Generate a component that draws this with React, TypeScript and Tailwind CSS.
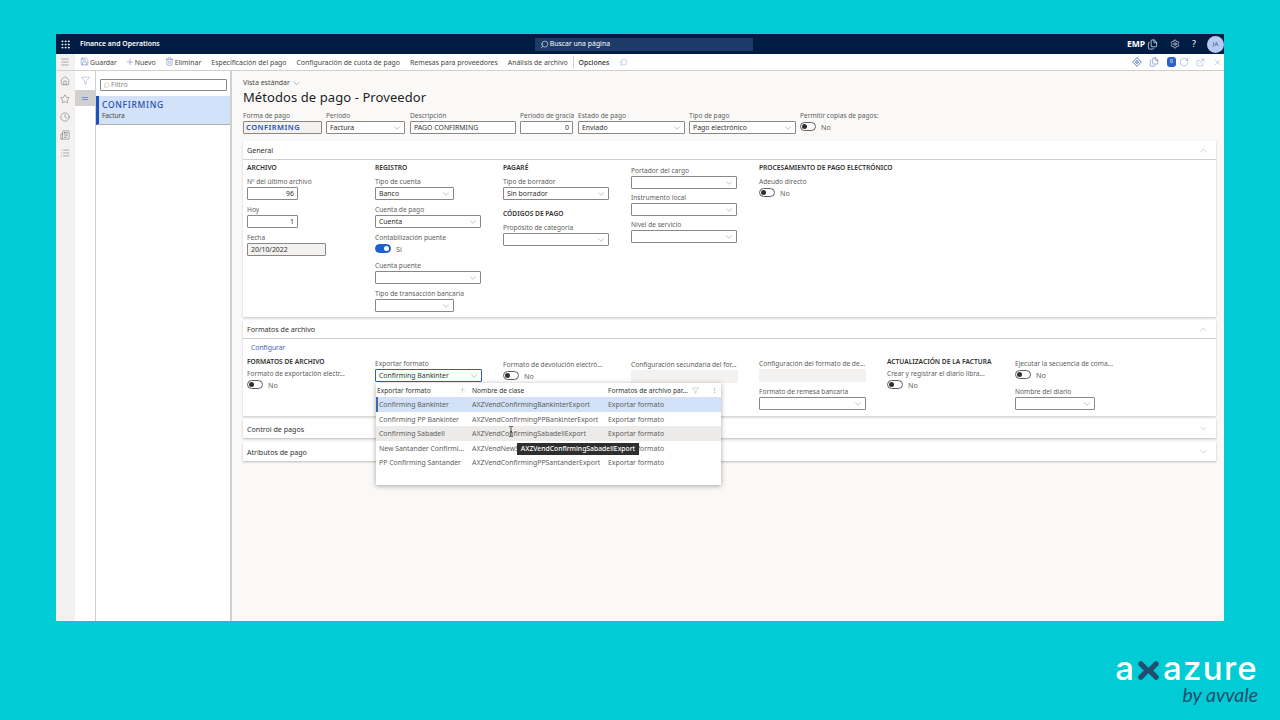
import { ChevronDown, ChevronUp, Clock, Filter, Home, List, Menu, Plus, Save, Search, Settings, Star, Trash2, X, ArrowUp, MoreVertical, Grip, RotateCw, ExternalLink, Newspaper, Files } from 'lucide-react';
import type { ReactNode } from 'react';

const Label = ({ children, className = '' }: { children: ReactNode; className?: string }) => (
  <div className={`h-[12px] leading-[13px] text-[6.6px] text-[#605e5c] whitespace-nowrap ${className}`}>{children}</div>
);

const Heading = ({ children }: { children: ReactNode }) => (
  <div className="h-[10px] leading-[12px] text-[6.65px] font-semibold text-[#323130] whitespace-nowrap">{children}</div>
);

const Input = ({ value = '', w, right = false, gray = false }: { value?: string; w: string; right?: boolean; gray?: boolean }) => (
  <div className={`${w} h-[13px] leading-[12px] border border-[#8a8886] rounded-[1px] px-[3px] text-[6.9px] text-[#323130] ${right ? 'text-right' : ''} ${gray ? 'bg-[#f3f2f1]' : 'bg-white'}`}>
    {value}
  </div>
);

const Select = ({ value = '', w, focus = false }: { value?: string; w: string; focus?: boolean }) => (
  <div className={`${w} h-[13px] border rounded-[1px] pl-[3px] pr-[2px] flex items-center justify-between bg-white text-[6.9px] text-[#323130] ${focus ? 'border-[#2f5fb8]' : 'border-[#8a8886]'}`}>
    <span className="pt-[1px]">{value}</span>
    <ChevronDown className="w-[10px] h-[10px] text-[#797775]" strokeWidth={1.1} />
  </div>
);

const Toggle = ({ on = false, text }: { on?: boolean; text: string }) => (
  <div className="h-[13px] flex items-start gap-[5px]">
    <div className={`w-[16px] h-[9px] mt-[1px] rounded-full border flex items-center px-[1px] ${on ? 'bg-[#1d5fd0] border-[#1d5fd0] justify-end' : 'bg-white border-[#605e5c] justify-start'}`}>
      <div className={`w-[5px] h-[5px] rounded-full ${on ? 'bg-white' : 'bg-[#323130]'}`} />
    </div>
    <span className="text-[7.2px] leading-[12px] text-[#605e5c]">{text}</span>
  </div>
);

const SectionHeader = ({ title, open = false }: { title: string; open?: boolean }) => (
  <div className={`h-[19px] pl-[4px] pr-[7px] flex items-center justify-between ${open ? 'border-b border-[#d2d0ce]' : ''}`}>
    <span className="pt-[1px] text-[7.1px] text-[#323130]">{title}</span>
    {open ? <ChevronUp className="w-[11px] h-[11px] text-[#a19f9d]" strokeWidth={1} /> : <ChevronDown className="w-[11px] h-[11px] text-[#a19f9d]" strokeWidth={1} />}
  </div>
);

const rows = [
  ['Confirming Bankinter', 'AXZVendConfirmingBankinterExport'],
  ['Confirming PP Bankinter', 'AXZVendConfirmingPPBankinterExport'],
  ['Confirming Sabadell', 'AXZVendConfirmingSabadellExport'],
  ['New Santander Confirmi...', 'AXZVendNewSantanderConfirmingExport'],
  ['PP Confirming Santander', 'AXZVendConfirmingPPSantanderExport'],
];

const FormatDropdown = () => (
  <div className="absolute left-[1px] top-[27px] z-10 w-[345px] h-[102px] bg-white shadow-[0_1px_5px_rgba(0,0,0,0.35)] text-[6.9px] text-[#605e5c]">
    <div className="h-[14px] pt-[1px] flex items-center text-[#323130] text-[6.6px]">
      <div className="w-[96px] pl-[1px] pr-[6px] flex items-center justify-between">
        <span>Exportar formato</span>
        <ArrowUp className="w-[7px] h-[7px] text-[#797775]" strokeWidth={1} />
      </div>
      <div className="w-[136px]">Nombre de clase</div>
      <div className="flex-1 flex items-center pr-[3px]">
        <span>Formatos de archivo par...</span>
        <Filter className="w-[7px] h-[7px] ml-[4px] text-[#797775]" strokeWidth={1} />
        <MoreVertical className="w-[7px] h-[7px] ml-auto text-[#797775]" strokeWidth={1} />
      </div>
    </div>
    {rows.map((row, i) => (
      <div key={row[0]} className={`h-[14.6px] pt-[2px] flex items-center ${i === 0 ? 'bg-[#d3e2f8] border-l-2 border-[#3f66b0]' : ''} ${i === 2 ? 'bg-[#edebe9]' : ''}`}>
        <div className={`${i === 0 ? 'w-[94px] pl-[1px]' : 'w-[96px] pl-[3px]'} whitespace-nowrap`}>{row[0]}</div>
        <div className="w-[136px] whitespace-nowrap">{row[1]}</div>
        <div className="flex-1">Exportar formato</div>
      </div>
    ))}
    <div className="absolute left-[141px] top-[60px] w-[122px] h-[12px] bg-[#2e2e2e] text-white text-[6.8px] font-medium leading-[12px] text-center whitespace-nowrap">
      AXZVendConfirmingSabadellExport
    </div>
    <svg className="absolute left-[132px] top-[43px] w-[6px] h-[11px] text-[#323130]" viewBox="0 0 6 11" fill="none" stroke="currentColor" strokeWidth="0.8">
      <path d="M1 .5h1.4L3 1l.6-.5H5M3 1v9M1 10.5h1.4L3 10l.6.5H5M2 5.5h2" />
    </svg>
  </div>
);

const DiamondIcon = () => (
  <svg className="w-[10px] h-[10px] text-[#3f66b0]" viewBox="0 0 12 12" fill="none" stroke="currentColor" strokeWidth="1">
    <path d="M6 .8 11.2 6 6 11.2.8 6z" />
    <circle cx="6" cy="6" r="1.6" />
  </svg>
);

export default function App() {
  return (
    <div className="w-[1280px] h-[720px] overflow-hidden bg-[#01cbd4] pt-[34px] px-[56px] font-['Noto_Sans',sans-serif]">
      <div className="w-[1168px] h-[587px] flex flex-col bg-white">
        {/* top bar */}
        <div className="h-[20px] bg-[#011c42] flex items-center text-white">
          <div className="w-[19px] flex justify-center">
            <Grip className="w-[11px] h-[11px]" strokeWidth={2} />
          </div>
          <span className="ml-[5px] pt-[1px] text-[6.9px] font-semibold">Finance and Operations</span>
          <div className="ml-[375px] w-[218px] h-[13px] bg-[#1c3b66] flex items-center pl-[5px] gap-[1px] text-[6.9px]">
            <Search className="w-[9px] h-[9px] -scale-x-100" strokeWidth={1.5} />
            <span className="pt-[1px]">Buscar una página</span>
          </div>
          <div className="ml-auto flex items-center">
            <span className="text-[8.5px] font-bold">EMP</span>
            <Files className="ml-[2px] w-[11px] h-[11px]" strokeWidth={1.5} />
            <Settings className="ml-[12px] w-[10px] h-[10px]" strokeWidth={1.5} />
            <span className="ml-[12px] text-[9px] w-[8px]">?</span>
            <div className="ml-[7px] w-[17px] h-[17px] rounded-full bg-[#b7caf0] text-[#36508a] text-[6px] flex items-center justify-center">JA</div>
          </div>
        </div>

        {/* toolbar */}
        <div className="h-[17px] flex items-center border-b border-[#d2d0ce] text-[6.9px] text-[#484644]">
          <div className="w-[19px] h-full bg-[#f3f2f1] pr-[2px] flex items-center justify-center">
            <Menu className="w-[10px] h-[10px] text-[#484644]" strokeWidth={1} />
          </div>
          <div className="ml-[5px] flex items-center gap-[10px] whitespace-nowrap">
            <span className="flex items-center gap-[1px]"><Save className="w-[9px] h-[9px] text-[#3f66b0]" strokeWidth={1.2} /><span className="pt-[2px]">Guardar</span></span>
            <span className="-ml-[2px] flex items-center"><Plus className="w-[10px] h-[10px] text-[#3f66b0]" strokeWidth={1} /><span className="pt-[2px]">Nuevo</span></span>
            <span className="-ml-[1px] flex items-center gap-[1px]"><Trash2 className="w-[9px] h-[9px] text-[#3f66b0]" strokeWidth={1.2} /><span className="pt-[2px]">Eliminar</span></span>
            <span className="pt-[2px]">Especificación del pago</span>
            <span className="pt-[2px]">Configuración de cuota de pago</span>
            <span className="pt-[2px]">Remesas para proveedores</span>
            <span className="pt-[2px] pr-[5px] border-r border-[#d2d0ce]">Análisis de archivo</span>
          </div>
          <span className="ml-[5px] pt-[2px] font-medium text-[#323130]">Opciones</span>
          <Search className="ml-[10px] w-[9px] h-[9px] text-[#6e8fd0] -scale-x-100" strokeWidth={1} />
          <div className="ml-auto pr-[2px] flex items-center gap-[7px] text-[#5b7cc0]">
            <DiamondIcon />
            <Files className="w-[10px] h-[10px]" strokeWidth={1.5} />
            <div className="ml-[1px] w-[9px] h-[10px] rounded-[3px] bg-[#2a62c8] text-white text-[5px] leading-[9px] text-center">0</div>
            <RotateCw className="-ml-[4px] w-[10px] h-[10px]" strokeWidth={1} />
            <ExternalLink className="w-[9px] h-[9px]" strokeWidth={1} />
            <X className="ml-[1px] w-[9px] h-[9px]" strokeWidth={1} />
          </div>
        </div>

        {/* body */}
        <div className="flex-1 flex min-h-0">
          <div className="w-[19px] bg-[#f3f2f1] pr-[2px] flex flex-col items-center pt-[5px] gap-[8px] text-[#484644]">
            <Home className="w-[10px] h-[10px]" strokeWidth={1} />
            <Star className="w-[10px] h-[10px]" strokeWidth={1} />
            <Clock className="w-[10px] h-[10px]" strokeWidth={1} />
            <Newspaper className="w-[10px] h-[10px]" strokeWidth={1} />
            <List className="w-[10px] h-[10px]" strokeWidth={1} />
          </div>
          <div className="w-[21px] flex flex-col items-stretch border-r border-[#d2d0ce]">
            <div className="h-[19px] flex items-center justify-center">
              <Filter className="w-[9px] h-[9px] text-[#5b7cc0]" strokeWidth={1} />
            </div>
            <div className="h-[16px] bg-[#d2d0ce] flex flex-col items-center justify-center gap-[1px]">
              <div className="w-[6px] h-[1px] bg-[#6e8fd0]" />
              <div className="w-[6px] h-[1px] bg-[#6e8fd0]" />
            </div>
          </div>
          <div className="w-[136px] border-r-2 border-[#d2d0ce]">
            <div className="h-[25px] pl-[4px] pr-[3px] pt-[8px]">
              <div className="h-[12px] border border-[#8a8886] rounded-[1px] flex items-center pl-[2px] gap-[1px] text-[7px] text-[#8a8886]">
                <Search className="w-[7px] h-[7px] -scale-x-100" strokeWidth={1} />
                Filtro
              </div>
            </div>
            <div className="h-[29px] bg-[#d3e2f8] border-l-[3px] border-[#1f50bf] border-b border-b-[#b3b0ad] pl-[3px] pt-[3px]">
              <div className="text-[8.5px] leading-[12px] font-medium tracking-[0.7px] text-[#1f4fb0]">CONFIRMING</div>
              <div className="text-[6.5px] leading-[9px] text-[#484644]">Factura</div>
            </div>
          </div>

          {/* main */}
          <div className="flex-1 bg-[#faf9f8] pt-[6px] pl-[11px] pr-[8px]">
            <div className="h-[12px] flex items-center gap-[2px] text-[7px] text-[#484644]">
              Vista estándar <ChevronDown className="w-[9px] h-[9px]" strokeWidth={1} />
            </div>
            <div className="h-[16px] leading-[16px] text-[13px] tracking-[0.08px] text-[#201f1e]">Métodos de pago - Proveedor</div>
            <div className="mt-[4px] flex items-start">
              <div className="w-[83px]">
                <Label>Forma de pago</Label>
                <div className="w-[79px] h-[13px] border border-[#8a8886] bg-[#f3f2f1] rounded-[1px] px-[2px] text-[7.5px] leading-[11px] font-semibold tracking-[0.5px] text-[#1f4fb0]">CONFIRMING</div>
              </div>
              <div className="w-[84px]"><Label>Período</Label><Select value="Factura" w="w-[79px]" /></div>
              <div className="w-[110px]"><Label>Descripción</Label><Input value="PAGO CONFIRMING" w="w-[106px]" /></div>
              <div className="w-[58px]"><Label>Período de gracia</Label><Input value="0" right w="w-[53px]" /></div>
              <div className="w-[111px]"><Label>Estado de pago</Label><Select value="Enviado" w="w-[107px]" /></div>
              <div className="w-[111px]"><Label>Tipo de pago</Label><Select value="Pago electrónico" w="w-[107px]" /></div>
              <div><Label>Permitir copias de pagos:</Label><Toggle text="No" /></div>
            </div>

            {/* general */}
            <div className="mt-[7px] h-[176px] bg-white shadow-[0_1px_2px_rgba(0,0,0,0.2)]">
              <SectionHeader title="General" open />
              <div className="flex pl-[4px] pt-[2px]">
                <div className="w-[128px] flex flex-col gap-[3px]">
                  <Heading>ARCHIVO</Heading>
                  <div><Label>Nº del último archivo</Label><Input value="96" right w="w-[51px]" /></div>
                  <div><Label>Hoy</Label><Input value="1" right w="w-[51px]" /></div>
                  <div><Label>Fecha</Label><Input value="20/10/2022" gray w="w-[79px]" /></div>
                </div>
                <div className="w-[128px] flex flex-col gap-[3px]">
                  <Heading>REGISTRO</Heading>
                  <div><Label>Tipo de cuenta</Label><Select value="Banco" w="w-[79px]" /></div>
                  <div><Label>Cuenta de pago</Label><Select value="Cuenta" w="w-[106px]" /></div>
                  <div><Label>Contabilización puente</Label><Toggle on text="Sí" /></div>
                  <div><Label>Cuenta puente</Label><Select w="w-[106px]" /></div>
                  <div><Label>Tipo de transacción bancaria</Label><Select w="w-[79px]" /></div>
                </div>
                <div className="w-[128px] flex flex-col gap-[3px]">
                  <Heading>PAGARÉ</Heading>
                  <div><Label>Tipo de borrador</Label><Select value="Sin borrador" w="w-[106px]" /></div>
                  <div className="mt-[5px]"><Heading>CÓDIGOS DE PAGO</Heading></div>
                  <div><Label>Propósito de categoría</Label><Select w="w-[106px]" /></div>
                </div>
                <div className="w-[128px] pt-[2px] flex flex-col gap-[2px]">
                  <div><Label>Portador del cargo</Label><Select w="w-[106px]" /></div>
                  <div><Label>Instrumento local</Label><Select w="w-[106px]" /></div>
                  <div><Label>Nivel de servicio</Label><Select w="w-[106px]" /></div>
                </div>
                <div className="flex flex-col gap-[3px]">
                  <Heading>PROCESAMIENTO DE PAGO ELECTRÓNICO</Heading>
                  <div><Label>Adeudo directo</Label><Toggle text="No" /></div>
                </div>
              </div>
            </div>

            {/* formatos */}
            <div className="mt-[3px] h-[96px] bg-white shadow-[0_1px_2px_rgba(0,0,0,0.2)]">
              <SectionHeader title="Formatos de archivo" open />
              <div className="h-[13px] pl-[8px] text-[6.8px] leading-[17px] text-[#3f66b0]">Configurar</div>
              <div className="flex pl-[4px] pt-[4px]">
                <div className="w-[128px] flex flex-col gap-[1px]">
                  <Heading>FORMATOS DE ARCHIVO</Heading>
                  <div><Label>Formato de exportación electr...</Label><Toggle text="No" /></div>
                </div>
                <div className="relative w-[128px] pt-[1px]">
                  <Label>Exportar formato</Label>
                  <Select value="Confirming Bankinter" focus w="w-[107px]" />
                  <FormatDropdown />
                </div>
                <div className="w-[128px] pt-[2px]">
                  <Label>Formato de devolución electró...</Label>
                  <Toggle text="No" />
                </div>
                <div className="w-[128px] pt-[2px]">
                  <Label>Configuración secundaria del for...</Label>
                  <div className="w-[107px] h-[13px] bg-[#f3f2f1]" />
                </div>
                <div className="w-[128px] pt-[1px] flex flex-col gap-[3px]">
                  <div>
                    <Label>Configuración del formato de de...</Label>
                    <div className="w-[107px] h-[13px] bg-[#f3f2f1]" />
                  </div>
                  <div><Label>Formato de remesa bancaria</Label><Select w="w-[107px]" /></div>
                </div>
                <div className="w-[128px] flex flex-col gap-[1px]">
                  <Heading>ACTUALIZACIÓN DE LA FACTURA</Heading>
                  <div><Label>Crear y registrar el diario libra...</Label><Toggle text="No" /></div>
                </div>
                <div className="pt-[1px] flex flex-col gap-[3px]">
                  <div><Label>Ejecutar la secuencia de coma...</Label><Toggle text="No" /></div>
                  <div><Label>Nombre del diario</Label><Select w="w-[80px]" /></div>
                </div>
              </div>
            </div>

            <div className="mt-[3px] bg-white shadow-[0_1px_2px_rgba(0,0,0,0.25)]"><SectionHeader title="Control de pagos" /></div>
            <div className="mt-[4px] bg-white shadow-[0_1px_2px_rgba(0,0,0,0.25)]"><SectionHeader title="Atributos de pago" /></div>
          </div>
        </div>
      </div>

      {/* logo */}
      <div className="mt-[30px] -mr-[34px] flex flex-col items-end">
        <div className="flex items-center h-[34px] text-[33px] leading-[34px] text-white font-['Inter',sans-serif] font-medium">
          <span>a</span>
          <svg className="w-[23px] h-[19px] mt-[4px] mx-[3px]" viewBox="0 0 24 20" fill="none" stroke="#1f4f6e" strokeWidth="5.5" strokeLinecap="round">
            <path d="M4 3l6 6M20 3l-6 6M4 17l6-6M20 17l-6-6" />
          </svg>
          <span className="tracking-[1.3px]">azure</span>
        </div>
        <div className="text-[19.5px] leading-[20px] italic text-[#1f4f6e] font-['Lato',sans-serif]">by avvale</div>
      </div>
    </div>
  );
}
